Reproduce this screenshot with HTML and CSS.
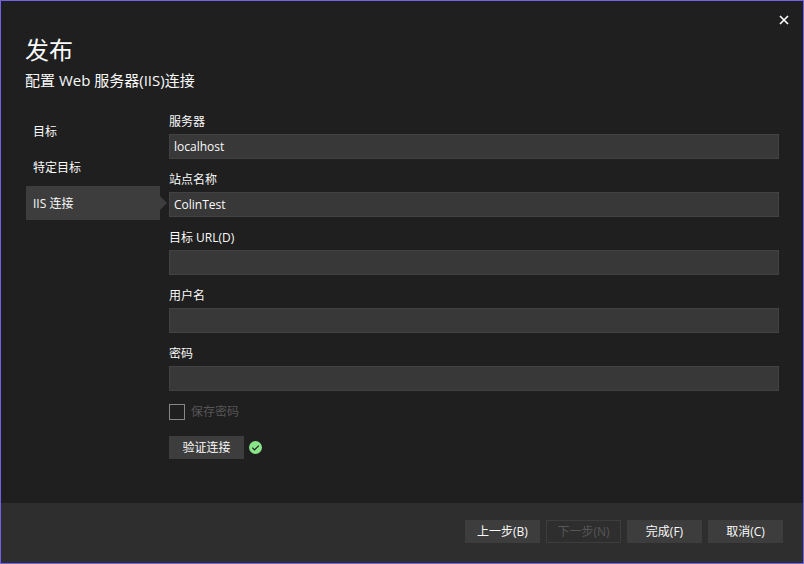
FILE: index.html
```html
<!DOCTYPE html>
<html lang="zh-CN">
<head>
<meta charset="utf-8">
<meta name="viewport" content="width=device-width, initial-scale=1">
<title>发布</title>
<link rel="stylesheet" href="styles.css">
</head>
<body>
<form class="dialog">
  <div class="titlebar">
    <button class="close" type="button" aria-label="关闭">
      <svg width="10" height="10" viewBox="0 0 10 10" aria-hidden="true"><path d="M1 1l8 8M9 1L1 9" fill="none" stroke="currentColor" stroke-width="1.7"/></svg>
    </button>
  </div>
  <header class="heading">
    <h1>发布</h1>
    <p>配置 Web 服务器(IIS)连接</p>
  </header>
  <div class="content">
    <nav class="steps">
      <a class="step" href="#target">目标</a>
      <a class="step" href="#specific">特定目标</a>
      <a class="step current" href="#iis" aria-current="step">IIS 连接</a>
    </nav>
    <main class="fields">
      <div class="field"><label for="server">服务器</label><input id="server" type="text" value="localhost"></div>
      <div class="field"><label for="site">站点名称</label><input id="site" type="text" value="ColinTest"></div>
      <div class="field"><label for="url">目标 URL(D)</label><input id="url" type="text"></div>
      <div class="field"><label for="user">用户名</label><input id="user" type="text"></div>
      <div class="field"><label for="password">密码</label><input id="password" type="password"></div>
      <div class="save"><input id="save" type="checkbox" disabled><label for="save">保存密码</label></div>
      <div class="verify">
        <button class="button" type="button">验证连接</button>
        <svg width="13" height="13" viewBox="0 0 13 13" aria-hidden="true"><circle cx="6.5" cy="6.5" r="6.5" fill="#89e589"/><path d="M3.3 6.7l2.2 2.2 4.3-4.3" fill="none" stroke="#1f1f1f" stroke-width="1.2"/></svg>
      </div>
    </main>
  </div>
  <footer class="actions">
    <button class="button" type="button">上一步(B)</button>
    <button class="button" type="button" disabled>下一步(N)</button>
    <button class="button" type="submit">完成(F)</button>
    <button class="button" type="button">取消(C)</button>
  </footer>
</form>
</body>
</html>
```
FILE: styles.css
```css
* {
  box-sizing: border-box;
}

body {
  margin: 0;
  background: #1f1f1f;
  color: #fafafa;
}

body,
input,
button {
  font-family: "Open Sans", "Noto Sans CJK SC", sans-serif;
  font-size: 12px;
  line-height: 16px;
}

.dialog {
  display: flex;
  flex-direction: column;
  min-height: 100vh;
  border: 1px solid #7160e8;
}

.titlebar {
  display: flex;
  justify-content: flex-end;
  padding: 8px 8px 0;
}

.close {
  display: grid;
  place-items: center;
  width: 22px;
  height: 22px;
  padding: 0;
  border: 0;
  background: none;
  color: inherit;
}

.heading {
  padding: 1px 24px 0;
}

h1 {
  margin: 0;
  font-size: 24px;
  font-weight: 400;
  line-height: 36px;
}

.heading p {
  margin: 0;
  font-size: 15px;
  line-height: 24px;
}

.content {
  display: flex;
  flex: 1;
  gap: 9px;
  padding: 22px 24px 24px 25px;
}

.steps {
  display: flex;
  flex-direction: column;
  flex: 0 0 134px;
  gap: 2px;
}

.step {
  position: relative;
  padding: 10px 7px 8px;
  color: inherit;
  text-decoration: none;
}

.current {
  background: #3d3d3d;
}

.current::after {
  content: "";
  position: absolute;
  top: 10px;
  left: 100%;
  border: 7px solid transparent;
  border-left-color: #3d3d3d;
  border-right-width: 0;
}

.fields {
  display: flex;
  flex: 1;
  flex-direction: column;
  gap: 13px;
}

.field {
  display: flex;
  flex-direction: column;
  gap: 4px;
}

.field input {
  width: 100%;
  height: 25px;
  padding: 0 4px;
  border: 1px solid #424242;
  background: #383838;
  color: inherit;
  outline: 0;
}

.save {
  display: flex;
  align-items: center;
  gap: 6px;
  padding: 0 0 3px;
  color: #565656;
}

.save input {
  appearance: none;
  width: 16px;
  height: 16px;
  margin: 0;
  border: 1px solid #868686;
}

.verify {
  display: flex;
  align-items: center;
  gap: 5px;
}

.button {
  min-width: 75px;
  height: 23px;
  padding: 0 8px;
  border: 1px solid #3d3d3d;
  background: #3d3d3d;
  color: inherit;
}

.button:disabled {
  background: transparent;
  color: #565656;
}

.actions {
  display: flex;
  justify-content: flex-end;
  gap: 6px;
  padding: 17px 20px 20px;
  background: #2e2e2e;
}
```
